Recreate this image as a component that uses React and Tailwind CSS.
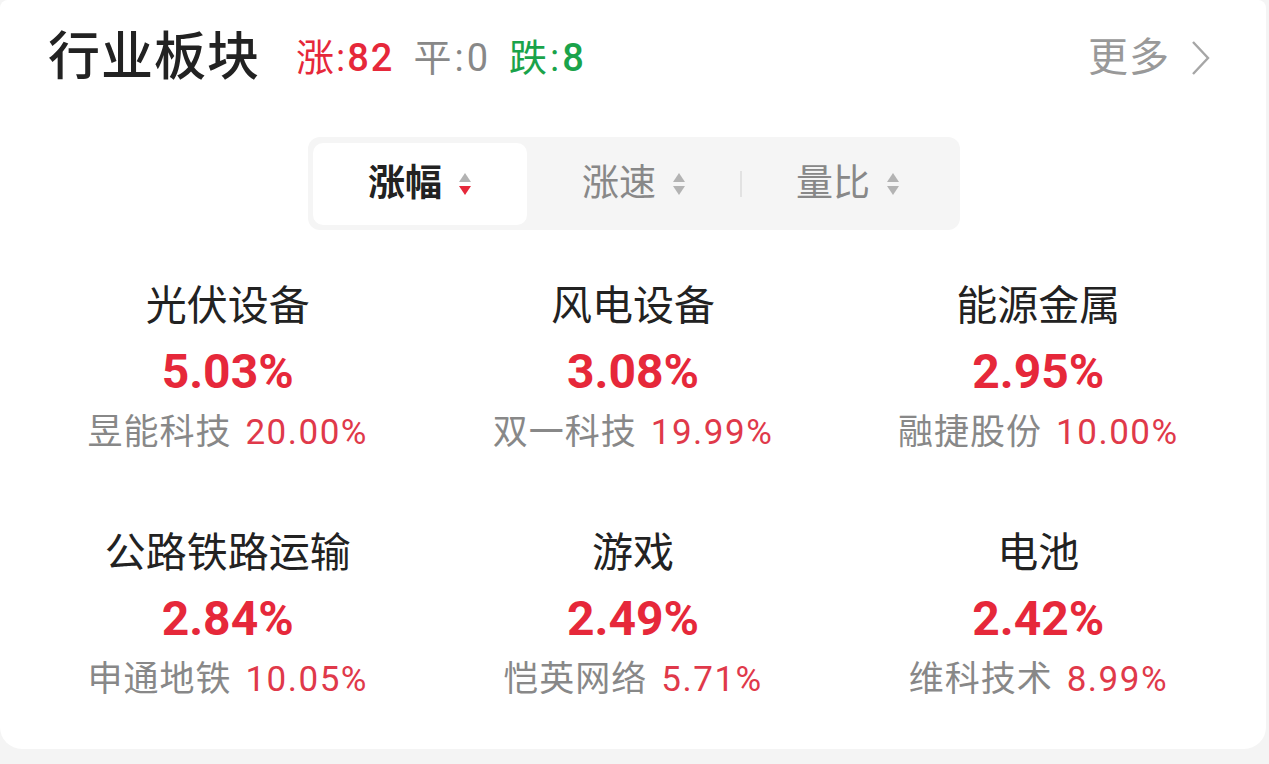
import React from "react";

const items = [
  { name: "光伏设备", pct: "5.03%", stock: "昱能科技", stockPct: "20.00%" },
  { name: "风电设备", pct: "3.08%", stock: "双一科技", stockPct: "19.99%" },
  { name: "能源金属", pct: "2.95%", stock: "融捷股份", stockPct: "10.00%" },
  { name: "公路铁路运输", pct: "2.84%", stock: "申通地铁", stockPct: "10.05%" },
  { name: "游戏", pct: "2.49%", stock: "恺英网络", stockPct: "5.71%" },
  { name: "电池", pct: "2.42%", stock: "维科技术", stockPct: "8.99%" },
];

const SortIcon = ({ active }) => (
  <svg width="14" height="24" viewBox="0 0 14 24" className="ml-[16px]">
    <polygon points="7,1 13,10 1,10" fill="#b3b3b3" />
    <polygon points="1,14 13,14 7,23" fill={active ? "#e6283a" : "#b3b3b3"} />
  </svg>
);

const Tab = ({ label, active }) => (
  <div
    className={
      "w-[214px] h-[82px] flex items-center justify-center rounded-[10px] " +
      (active ? "bg-white" : "")
    }
  >
    <span
      className={
        "text-[37px] leading-none " +
        (active ? "text-[#222] font-bold" : "text-[#888]")
      }
    >
      {label}
    </span>
    <SortIcon active={active} />
  </div>
);

const App = () => {
  return (
    <div
      className="w-[1269px] h-[764px] bg-[#f4f4f4] overflow-hidden"
      style={{ fontFamily: "Roboto, 'Noto Sans CJK SC', sans-serif" }}
    >
      <div className="w-[1266px] bg-white rounded-b-[22px] rounded-t-[8px] pb-[49px]">
        {/* header */}
        <div className="h-[116px] flex items-center pl-[48px] pr-[54px]">
          <span className="text-[52px] font-medium text-[#222] leading-none tracking-[1px]">
            行业板块
          </span>
          <span className="ml-[36px] text-[38px] leading-none tracking-[2px] text-[#e6283a]">
            涨:<span className="font-medium">82</span>
          </span>
          <span className="ml-[19px] text-[38px] leading-none tracking-[3px] text-[#888]">
            平:0
          </span>
          <span className="ml-[18px] text-[38px] leading-none tracking-[3px] text-[#1aa34a]">
            跌:<span className="font-medium">8</span>
          </span>
          <div className="ml-auto flex items-center">
            <span className="text-[40px] leading-none tracking-[1px] text-[#999]">更多</span>
            <svg width="22" height="36" viewBox="0 0 22 36" className="ml-[20px]">
              <polyline
                points="3,2 18,18 3,34"
                fill="none"
                stroke="#a6a6a6"
                strokeWidth="2.4"
              />
            </svg>
          </div>
        </div>

        {/* segmented control */}
        <div className="mt-[21px] flex justify-center">
          <div className="ml-[2px] flex items-center p-[5px] bg-[#f5f5f5] rounded-[12px] h-[93px]">
            <Tab label="涨幅" active />
            <Tab label="涨速" />
            <div className="relative">
              <div className="absolute left-[-1px] top-[-13px] w-[2px] h-[26px] bg-[#e2e2e2]" />
            </div>
            <Tab label="量比" />
          </div>
        </div>

        {/* grid */}
        <div className="mt-[51px] px-[25px] grid grid-cols-3 gap-y-[75px]">
          {items.map((it) => (
            <div key={it.name} className="flex flex-col items-center">
              <div className="text-[41px] leading-[50px] text-[#222]">{it.name}</div>
              <div className="text-[48px] leading-[82px] font-bold text-[#e6283a]">
                {it.pct}
              </div>
              <div className="leading-[40px] flex items-center">
                <span className="text-[35px] tracking-[1px] text-[#888]">{it.stock}</span>
                <span className="ml-[14px] text-[35px] tracking-[1.5px] text-[#e0394a]">
                  {it.stockPct}
                </span>
              </div>
            </div>
          ))}
        </div>
      </div>
    </div>
  );
};

export default App;
